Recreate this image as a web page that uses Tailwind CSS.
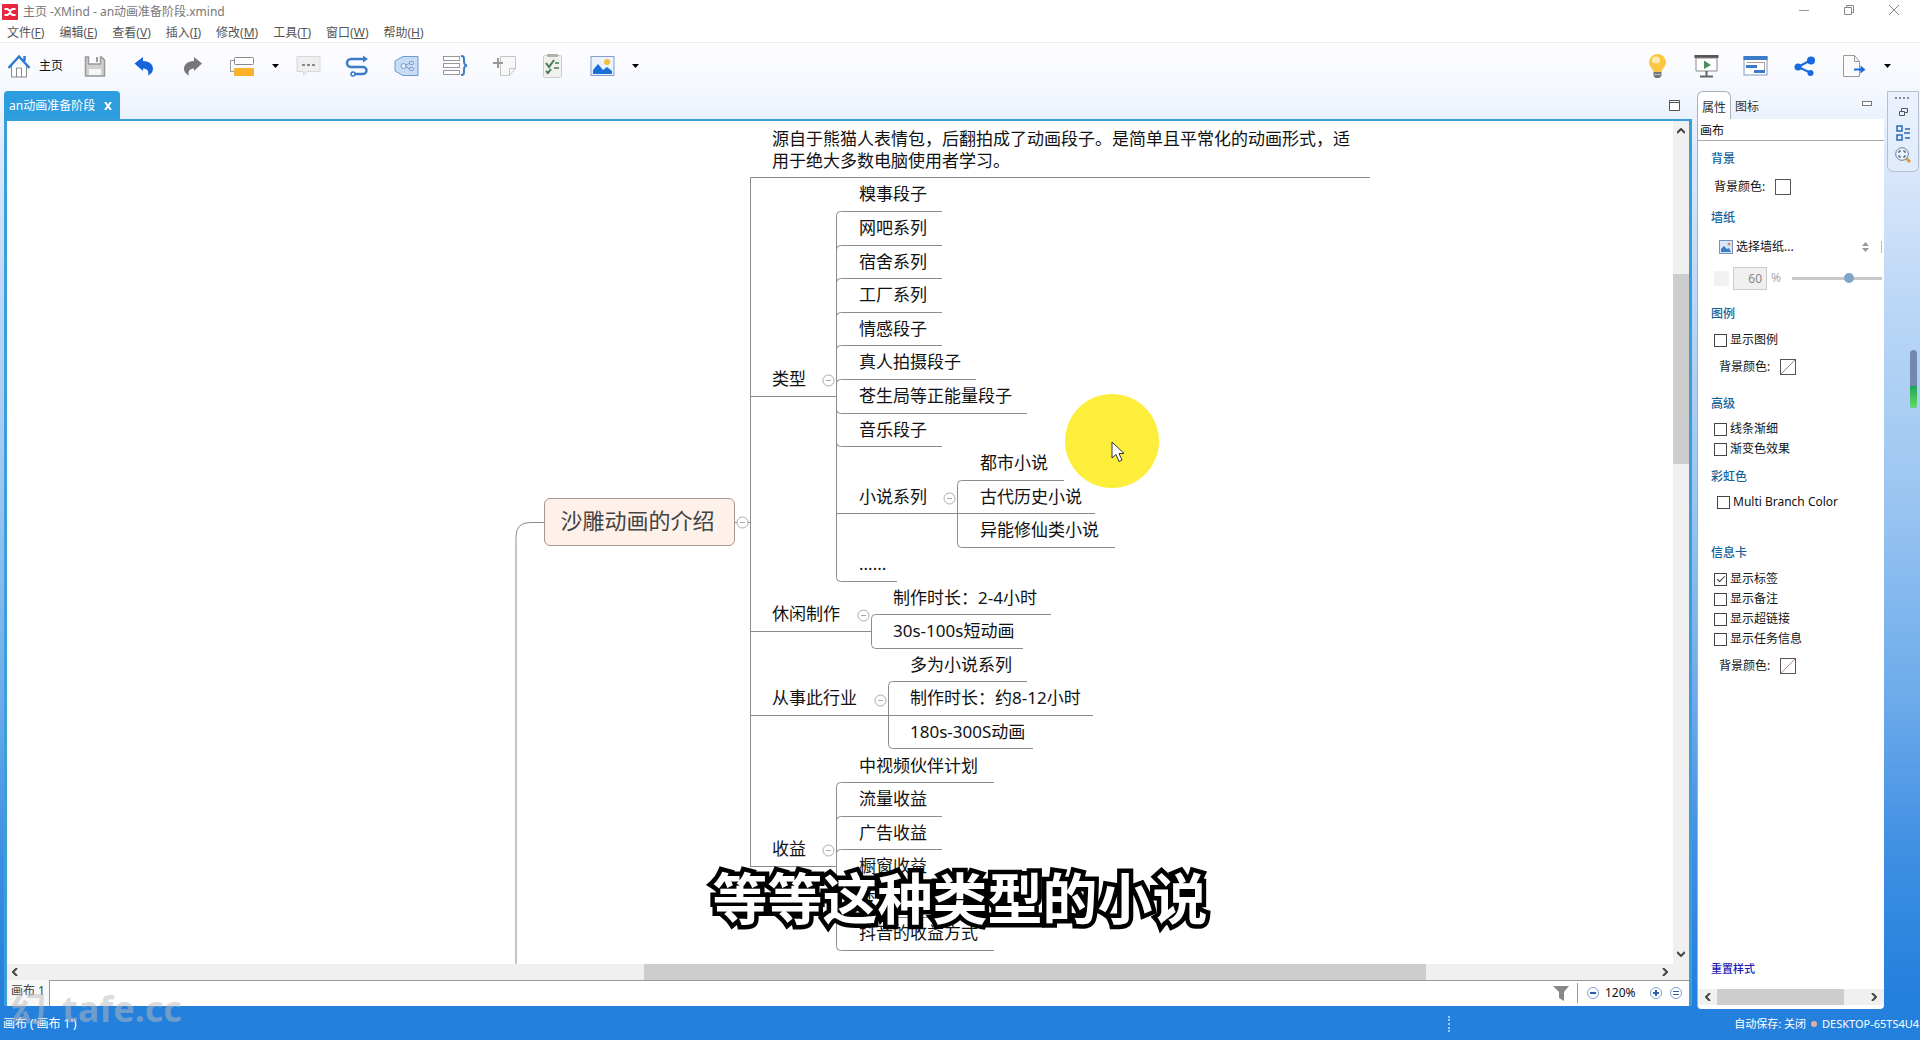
<!DOCTYPE html>
<html lang="zh-CN">
<head>
<meta charset="utf-8">
<title>主页 -XMind - an动画准备阶段.xmind</title>
<script src="https://cdn.jsdelivr.net/npm/@tailwindcss/browser@4"></script>
</head>
<body class="relative overflow-hidden font-['Noto_Sans','Noto_Sans_CJK_SC',sans-serif] text-xs text-[#111]">
<div class="flex h-screen flex-col bg-[linear-gradient(to_bottom,#ffffff_0%,#fdfdff_5%,#f0f5fe_10%,#dbe8fb_15%,#bcd7f6_29%,#9ac5f1_48%,#6dabeb_67%,#3f8fe3_82%,#2380dd_96%,#2380dd_100%)]">

<!-- Title bar -->
<header class="flex h-[23px] items-center bg-white pl-[2px] pr-1 text-[#777]">
  <svg class="size-4" viewBox="0 0 16 16"><rect width="16" height="16" rx="1" fill="#e8263f"/><path d="M2.500 5h3L8 7l2.500-2h3M2.500 11h3L8 9l2.500 2h3" stroke="#fff" stroke-width="2.200" fill="none"/></svg>
  <h1 class="ml-[5px] text-[12px] leading-5">主页 -XMind - an动画准备阶段.xmind</h1>
  <div class="ml-auto flex pb-1">
    <button aria-label="最小化" class="flex w-[45px] justify-center"><svg class="size-3" viewBox="0 0 12 12"><path d="M1 6.500h10" stroke="#999"/></svg></button>
    <button aria-label="还原" class="flex w-[45px] justify-center"><svg class="size-3" viewBox="0 0 12 12" fill="none" stroke="#888"><path d="M1.500 3.500h7v7h-7zM3.500 3.500v-2h7v7h-2"/></svg></button>
    <button aria-label="关闭" class="flex w-[45px] justify-center"><svg class="size-3" viewBox="0 0 12 12"><path d="M1 1l10 10M11 1L1 11" stroke="#888"/></svg></button>
  </div>
</header>
<nav class="flex h-5 items-center gap-[15px] border-b border-[#ececec] bg-white pl-[7px] leading-5 text-[#555]">
  <button>文件(<u>F</u>)</button><button>编辑(<u>E</u>)</button><button>查看(<u>V</u>)</button><button>插入(<u>I</u>)</button><button>修改(<u>M</u>)</button><button>工具(<u>T</u>)</button><button>窗口(<u>W</u>)</button><button>帮助(<u>H</u>)</button>
</nav>

<!-- Toolbar -->
<div class="flex h-12 items-center pb-[2px] pl-[7px] pr-7">
  <button class="flex w-14 items-center justify-between leading-5">
    <svg class="h-6 w-6" viewBox="0 0 24 24" fill="none"><path d="M4.500 12v11h15V12" stroke="#888" fill="#fff"/><path d="M9.500 23v-9h5v9" stroke="#888"/><path d="M1.500 14L12 2.500 22.500 14M17.500 2v5" stroke="#2f7bd0" stroke-width="2.500"/></svg>主页</button>
  <div class="ml-[19px] flex gap-6">
    <button aria-label="保存" class="w-[25px]"><svg class="h-6 w-[25px]" viewBox="0 0 25 24"><path d="M3.500 3h3v7h12V3h1l3 3v16h-19z" fill="#d0d0d0" stroke="#999" stroke-width="1.500"/><path d="M7 15h12v6H7z" fill="#f6f6f6"/><path d="M15 3v5" stroke="#999" stroke-width="2"/></svg></button>
    <button aria-label="撤销" class="w-[25px]"><svg class="h-6 w-[25px]" viewBox="0 0 25 24"><path d="M3.500 9.500L12 3v4c7 0 10 4 10 8 0 3-2 5-5 6.500 1-3 .5-7-5-7V17z" fill="#1565d8"/></svg></button>
    <button aria-label="重做" class="w-[25px]"><svg class="h-6 w-[25px]" viewBox="0 0 25 24"><path d="M22 9.500L14 3v4C7 7 4 11 4 15c0 3 2 5 5 6.500-1-3-.5-7 5-7V17z" fill="#777"/></svg></button>
    <button aria-label="主题" class="w-[25px]"><svg class="h-6 w-[25px]" viewBox="0 0 25 24" fill="none"><path d="M6 6.500H1.500v11H6" stroke="#999"/><rect x="5.500" y="3.500" width="19" height="7" rx="1" fill="#fff" stroke="#888"/><rect x="5" y="14" width="20" height="8" rx="1" fill="#fbb12a"/></svg></button>
  </div>
  <button aria-label="更多主题" class="ml-4 flex w-[10px] justify-center"><svg class="h-1 w-[7px]" viewBox="0 0 7 4"><path d="M0 0h7L3.500 4z"/></svg></button>
  <div class="ml-4 flex gap-6">
    <button aria-label="标注" class="w-[25px]"><svg class="h-6 w-[25px]" viewBox="0 0 25 24"><path d="M1 2.500h23v15H11l-3 4-1-4H1z" fill="#efefef" stroke="#d8d8d8"/><path d="M6 11h3M11 11h3M16 11h3" stroke="#888" stroke-width="2"/></svg></button>
    <button aria-label="联系" class="w-[25px]"><svg class="h-6 w-[25px]" viewBox="0 0 25 24" fill="none" stroke="#3b7bc8" stroke-width="2.500"><path d="M19 5H6a4 4 0 0 0 0 8h12a3.500 3.500 0 0 1 0 7h-8"/><circle cx="8" cy="20" r="2" stroke-width="1.500"/><path d="M18 1.500l5 3.500-5 3.500z" fill="#3b7bc8" stroke="none"/></svg></button>
    <button aria-label="外框" class="w-[25px]"><svg class="h-6 w-[25px]" viewBox="0 0 25 24" fill="none"><path d="M9 2.500h15v19H9L1 17V7z" fill="#c9dcf5" stroke="#6e9ad2"/><g stroke="#6e9ad2"><circle cx="9.500" cy="12" r="2.500" fill="#e6effb"/><path d="M12 11l4-2M12 13l4 2"/><rect x="15.500" y="7.500" width="4" height="3" rx="1"/><rect x="15.500" y="13.500" width="4" height="3" rx="1"/></g></svg></button>
    <button aria-label="概要" class="w-[25px]"><svg class="h-6 w-[25px]" viewBox="0 0 25 24" fill="none"><g stroke="#999" fill="#fff"><rect x=".5" y="2.500" width="16" height="4"/><rect x=".5" y="9.500" width="16" height="4"/><rect x=".5" y="16.500" width="16" height="4"/></g><path d="M18 2c3 0 3 1 3 4s0 5 3 5.500c-3 .5-3 2.500-3 5.500s0 4-3 4" stroke="#3b7bc8" stroke-width="2"/></svg></button>
    <button aria-label="备注" class="w-[25px]"><svg class="h-6 w-[25px]" viewBox="0 0 25 24" fill="none"><path d="M8.500 2.500h15v12l-6 7h-9z" fill="#f8f8f8" stroke="#c4c4c4"/><path d="M23.500 14.500h-6v7" stroke="#c4c4c4"/><path d="M1 9h10M6 4v10" stroke="#999" stroke-width="2"/></svg></button>
    <button aria-label="任务" class="w-[25px]"><svg class="h-6 w-[25px]" viewBox="0 0 25 24" fill="none"><rect x="2.500" y="1.500" width="18" height="22" rx="1" fill="#f0f0ec" stroke="#ccc"/><rect x="6" y="0" width="11" height="3" rx="1" fill="#b0b0a8"/><path d="M5 9l3 4 5-7M5 17l2 2 3-4" stroke="#4a7a55" stroke-width="2"/><path d="M14 9h4M13 14h5" stroke="#4a7a55" stroke-width="1.500"/></svg></button>
    <button aria-label="图片" class="w-[25px]"><svg class="h-6 w-[25px]" viewBox="0 0 25 24"><rect x="1" y="2.500" width="23" height="19" fill="#eaf2fc" stroke="#8a9bd0"/><circle cx="17" cy="8" r="3" fill="#f6bf3a"/><path d="M3 20v-4l5-6 5 6 4-3 5 4v3z" fill="#1c6fd4"/></svg></button>
  </div>
  <button aria-label="更多图片" class="ml-[15px] flex w-[10px] justify-center"><svg class="h-1 w-[7px]" viewBox="0 0 7 4"><path d="M0 0h7L3.500 4z"/></svg></button>

  <div class="ml-auto flex gap-6">
    <button aria-label="头脑风暴" class="w-[25px]"><svg class="h-6 w-[25px]" viewBox="0 0 25 24"><path d="M12.500 0a8.500 8.500 0 0 0-8.500 8.500c0 4 3.500 5.500 4.500 9.500h8c1-4 4.500-5.500 4.500-9.500A8.500 8.500 0 0 0 12.500 0z" fill="#fbc743"/><ellipse cx="11" cy="6" rx="4" ry="3.500" fill="#fdeab0"/><path d="M8.500 18h8v4l-2 2h-4l-2-2z" fill="#777"/><path d="M8.500 20.500h8" stroke="#bbb"/></svg></button>
    <button aria-label="演示" class="w-[25px]"><svg class="h-6 w-[25px]" viewBox="0 0 25 24"><path d="M.5 1h24v3H.5z" fill="#555"/><path d="M2 4h21v13H2z" fill="#fff" stroke="#888"/><path d="M10 6.500l7 4.500-7 4z" fill="#4d8f5a"/><path d="M12.500 17v5M6 22.500h13" stroke="#666" stroke-width="2"/></svg></button>
    <button aria-label="甘特图" class="w-[25px]"><svg class="h-6 w-[25px]" viewBox="0 0 25 24"><rect x="1" y="3" width="23" height="18" fill="#fff" stroke="#7a9cc6"/><path d="M.5 2h24v4H.5z" fill="#3b7bc8"/><path d="M3.500 8.500h18M21.500 8v10" stroke="#b69aa0"/><path d="M3 12.500h11M11 17.500h11" stroke="#3b7bc8" stroke-width="3"/></svg></button>
    <button aria-label="分享" class="w-[25px]"><svg class="h-6 w-[25px]" viewBox="0 0 25 24" fill="#1769e0"><path d="M19 6L6 13l13 6" fill="none" stroke="#1769e0" stroke-width="2"/><circle cx="19" cy="6.500" r="4"/><circle cx="6" cy="13" r="3.500"/><circle cx="18.500" cy="19" r="3"/></svg></button>
    <button aria-label="导出" class="w-[25px]"><svg class="h-6 w-[25px]" viewBox="0 0 25 24" fill="none"><path d="M2.500 1.500h11l5 6v15h-16z" fill="#fbfbfb" stroke="#999"/><path d="M13.500 1.500v6h5" stroke="#999"/><path d="M13 15.500h9" stroke="#1769e0" stroke-width="2"/><path d="M19.500 11.500l5 4-5 4z" fill="#1769e0"/></svg></button>
  </div>
  <button aria-label="更多导出" class="ml-4 flex w-[10px] justify-center"><svg class="h-1 w-[7px]" viewBox="0 0 7 4"><path d="M0 0h7L3.500 4z"/></svg></button>
</div>

<main class="flex min-h-0 flex-1 pl-1">
  <!-- Editor -->
  <section class="mb-[3px] mr-[5px] flex min-w-0 flex-1 flex-col">
    <div class="flex h-7 items-center">
      <div class="flex h-7 w-[116px] items-center justify-between rounded-t-[4px] bg-[#2e9de0] pl-[5px] pr-2 pt-[2px] leading-5 text-white">
        <span class="whitespace-nowrap">an动画准备阶段</span>
        <button aria-label="关闭标签"><svg class="size-2" viewBox="0 0 8 8"><path d="M1 0l6 8M7 0L1 8" stroke="#fff" stroke-width="2"/></svg></button>
      </div>
      <button aria-label="最大化" class="ml-auto mr-3"><svg class="size-[11px]" viewBox="0 0 11 11"><path d="M.5.5h10v10H.5zM.5 2.500h10" fill="#fff" stroke="#555"/></svg></button>
    </div>
    <div class="flex min-h-0 flex-1 flex-col border-x-[3px] border-t-2 border-[#3a9fd8] bg-white">
      <div class="flex min-h-0 flex-1">
        <!-- Mind map canvas -->
        <div class="relative min-w-0 flex-1 overflow-hidden whitespace-nowrap text-[17px] leading-5">
          <svg class="absolute left-0 top-0 h-[844px] w-[1400px]" viewBox="7 121 1400 844" fill="none" stroke="#8c8c8c">
            <path d="M544 522.500h-14q-14 0-14 14V965M735 522.500h15.500M750.500 866.500V177.500H1370"/>
            <path d="M750 396.500h86.500M750 631.500h121.500M750 715.500h343M750 866.500h86.500M837 513.500h258"/>
            <path d="M942 211.500H840.500q-4 0-4 4V577.500q0 4 4 4H897M942 245.500H840.500q-4 0-4 4M942 278.500H840.500q-4 0-4 4M942 312.500H840.500q-4 0-4 4M942 345.500H840.500q-4 0-4 4M976 379.500H840.500q-4 0-4 4M1027 413.500H840.500q-4 0-4-4M942 446.500H840.500q-4 0-4-4"/>
            <path d="M1064 480.500H961.500q-4 0-4 4V543.500q0 4 4 4H1115"/>
            <path d="M1051 614.500H875.500q-4 0-4 4V644.500q0 4 4 4H1023"/>
            <path d="M1027 681.500H892.500q-4 0-4 4V744.500q0 4 4 4H1033"/>
            <path d="M994 782.500H840.500q-4 0-4 4V946.500q0 4 4 4H994M942 816.500H840.500q-4 0-4 4M942 849.500H840.500q-4 0-4 4M942 883.500H840.500q-4 0-4-4M942 917.500H840.500q-4 0-4-4"/>
            <g fill="#fff" stroke="#aaa"><circle cx="742.500" cy="522.500" r="5.500"/><circle cx="828.500" cy="380.500" r="5.500"/><circle cx="949.500" cy="498.500" r="5.500"/><circle cx="863.500" cy="615.500" r="5.500"/><circle cx="880.500" cy="700.500" r="5.500"/><circle cx="828.500" cy="850.500" r="5.500"/><path d="M740 522.500h5M826 380.500h5M947 498.500h5M861 615.500h5M878 700.500h5M826 850.500h5"/></g>
          </svg>
          <div class="absolute left-[537px] top-[377px] flex h-12 w-[191px] items-center justify-center rounded-md border border-[#a89790] bg-[#fef1ea] pb-1 pr-1 text-[22px] text-[#444]">沙雕动画的介绍</div>
          <p class="absolute left-[765px] top-[7px] leading-[22px]">源自于熊猫人表情包，后翻拍成了动画段子。是简单且平常化的动画形式，适<br>用于绝大多数电脑使用者学习。</p>
          <span class="absolute left-[765px] top-[248px]">类型</span>
          <span class="absolute left-[852px] top-[63px]">糗事段子</span>
          <span class="absolute left-[852px] top-[97px]">网吧系列</span>
          <span class="absolute left-[852px] top-[131px]">宿舍系列</span>
          <span class="absolute left-[852px] top-[164px]">工厂系列</span>
          <span class="absolute left-[852px] top-[198px]">情感段子</span>
          <span class="absolute left-[852px] top-[231px]">真人拍摄段子</span>
          <span class="absolute left-[852px] top-[265px]">苍生局等正能量段子</span>
          <span class="absolute left-[852px] top-[299px]">音乐段子</span>
          <span class="absolute left-[852px] top-[366px]">小说系列</span>
          <span class="absolute left-[852px] top-[433px]">......</span>
          <span class="absolute left-[973px] top-[332px]">都市小说</span>
          <span class="absolute left-[973px] top-[366px]">古代历史小说</span>
          <span class="absolute left-[973px] top-[399px]">异能修仙类小说</span>
          <span class="absolute left-[765px] top-[483px]">休闲制作</span>
          <span class="absolute left-[886px] top-[467px]">制作时长：2-4小时</span>
          <span class="absolute left-[886px] top-[500px]">30s-100s短动画</span>
          <span class="absolute left-[765px] top-[567px]">从事此行业</span>
          <span class="absolute left-[903px] top-[534px]">多为小说系列</span>
          <span class="absolute left-[903px] top-[567px]">制作时长：约8-12小时</span>
          <span class="absolute left-[903px] top-[601px]">180s-300S动画</span>
          <span class="absolute left-[765px] top-[718px]">收益</span>
          <span class="absolute left-[852px] top-[635px]">中视频伙伴计划</span>
          <span class="absolute left-[852px] top-[668px]">流量收益</span>
          <span class="absolute left-[852px] top-[702px]">广告收益</span>
          <span class="absolute left-[852px] top-[735px]">橱窗收益</span>
          <span class="absolute left-[852px] top-[769px]">变现收益</span>
          <span class="absolute left-[852px] top-[802px]">抖音的收益方式</span>
          <!-- Pointer with highlight -->
          <div class="absolute left-[1058px] top-[273px] size-[94px] rounded-full bg-[#fdee3c]"></div>
          <svg class="absolute left-[1104px] top-[320px] h-[22px] w-[14px]" viewBox="0 0 14 22"><path d="M1 1v16l4-3.500 3 7 3-1.500-3-6.500h5z" fill="#fff" stroke="#333"/></svg>
        </div>
        <div class="flex w-4 flex-col items-center bg-[#f0f0f0]">
          <button aria-label="向上滚动" class="flex h-5 items-center"><svg class="h-[6px] w-[8px]" viewBox="0 0 8 6"><path d="M0 5l4-4 4 4" fill="none" stroke="#444" stroke-width="2"/></svg></button>
          <div class="grow-[133]"></div><div class="w-full grow-[190] bg-[#cdcdcd]"></div><div class="grow-[480]"></div>
          <button aria-label="向下滚动" class="flex h-5 items-center"><svg class="h-[6px] w-[8px]" viewBox="0 0 8 6"><path d="M0 1l4 4 4-4" fill="none" stroke="#444" stroke-width="2"/></svg></button>
        </div>
      </div>
      <div class="flex h-4 items-center bg-[#f0f0f0] pr-4">
        <button aria-label="向左滚动" class="flex w-4 justify-center"><svg class="h-[8px] w-[6px]" viewBox="0 0 6 8"><path d="M5 0L1 4l4 4" fill="none" stroke="#444" stroke-width="2"/></svg></button>
        <div class="grow-[621]"></div><div class="h-full grow-[782] bg-[#cdcdcd]"></div><div class="grow-[231]"></div>
        <button aria-label="向右滚动" class="flex w-4 justify-center"><svg class="h-[8px] w-[6px]" viewBox="0 0 6 8"><path d="M1 0l4 4-4 4" fill="none" stroke="#444" stroke-width="2"/></svg></button>
      </div>
      <div class="flex h-[26px] leading-5">
        <button class="w-[43px] border-r border-[#999] bg-[#f7f7f7] pb-1 text-[#444]">画布 1</button>
        <div class="flex flex-1 items-center justify-end border-t border-[#999] pb-[2px] pr-[7px]">
          <svg class="mr-2 h-4 w-4" viewBox="0 0 16 16"><path d="M0 1h16l-5 6v9l-5-3V7z" fill="#888"/></svg>
          <div class="mr-[9px] h-5 border-l border-[#999]"></div>
          <button aria-label="缩小"><svg class="size-3" viewBox="0 0 12 12" fill="none" stroke="#2a5fa8"><circle cx="6" cy="6" r="5.500" stroke="#7fa0cc"/><path d="M3 6h6" stroke-width="2"/></svg></button>
          <span class="ml-[6px] mr-3 w-[33px]">120%</span>
          <button aria-label="放大"><svg class="size-3" viewBox="0 0 12 12" fill="none" stroke="#2a5fa8"><circle cx="6" cy="6" r="5.500" stroke="#7fa0cc"/><path d="M3 6h6M6 3v6" stroke-width="2"/></svg></button>
          <button aria-label="实际大小" class="ml-2"><svg class="size-3" viewBox="0 0 12 12" fill="none" stroke="#2a5fa8"><circle cx="6" cy="6" r="5.500" stroke="#7fa0cc"/><path d="M3 4.500h6M3 7.500h6"/></svg></button>
        </div>
      </div>
    </div>
  </section>

  <!-- Properties panel -->
  <aside class="flex w-[187px] flex-col leading-5">
    <div class="flex h-7 items-center text-[#333]">
      <button class="h-7 w-[34px] rounded-t-md border border-b-0 border-[#a8b0bc] bg-white pt-1">属性</button>
      <button class="ml-1 mt-1 h-6">图标</button>
      <button aria-label="最小化面板" class="ml-auto mr-3 mb-1"><svg class="h-[5px] w-[10px]" viewBox="0 0 10 5"><rect x=".5" y=".5" width="9" height="4" fill="#fff" stroke="#777"/></svg></button>
    </div>
    <div class="flex min-h-0 flex-1 flex-col overflow-hidden rounded-b border-l border-[#a8b0bc] bg-white">
      <h2 class="h-[22px] border-b border-[#aaa] pl-[2px] pt-[2px]">画布</h2>
      <h3 class="mt-2 pl-[13px] font-medium text-[#14629c]">背景</h3>
      <div class="mt-2 flex items-center pl-4">背景颜色:<button aria-label="背景颜色" class="ml-[10px] size-4 border border-[#555] bg-white"></button></div>
      <h3 class="mt-[11px] pl-[13px] font-medium text-[#14629c]">墙纸</h3>
      <div class="mt-[9px] flex h-5 items-center pl-[21px]">
        <svg class="mr-[3px] size-[14px]" viewBox="0 0 14 14"><rect x=".5" y=".5" width="13" height="13" fill="#d9e6f8" stroke="#7d8fb5"/><circle cx="10" cy="4" r="1.500" fill="#d98a7c"/><path d="M2 12V9l3-3 3 3 2-1 2 4z" fill="#3b7bc8"/></svg>
        <select aria-label="墙纸" class="w-[126px] appearance-none bg-transparent"><option>选择墙纸...</option></select>
        <svg class="h-[10px] w-[7px]" viewBox="0 0 7 10"><path d="M0 4l3.500-4L7 4zM0 6l3.500 4L7 6z" fill="#999"/></svg>
        <div class="ml-3 h-3 w-px bg-[#bbb]"></div>
      </div>
      <div class="mt-[9px] flex h-6 items-center pl-4 text-[#aaa]">
        <span class="size-[15px] bg-[#f2f2f2]"></span>
        <input aria-label="不透明度" value="60" class="ml-1 h-[23px] w-[34px] border border-[#ccc] bg-[#f0f0f0] pr-1 text-right text-[#888]">
        <span class="ml-1 w-[21px]">%</span>
        <input type="range" aria-label="不透明度滑块" value="65" class="h-[3px] w-[90px] appearance-none bg-[#c8c8c8] [&::-webkit-slider-thumb]:h-[10px] [&::-webkit-slider-thumb]:w-[10px] [&::-webkit-slider-thumb]:appearance-none [&::-webkit-slider-thumb]:rounded-full [&::-webkit-slider-thumb]:bg-[#7fa6c8]">
      </div>
      <h3 class="mt-[14px] pl-[13px] font-medium text-[#14629c]">图例</h3>
      <label class="mt-[6px] flex items-center gap-[3px] pl-4"><input type="checkbox" class="size-[13px] appearance-none border border-[#444] bg-white">显示图例</label>
      <div class="mt-[7px] flex items-center pl-[21px]">背景颜色:<button aria-label="图例背景颜色" class="ml-[10px] size-4 border border-[#555]"><svg viewBox="0 0 14 14"><path d="M0 14L14 0" stroke="#888"/></svg></button></div>
      <h3 class="mt-[17px] pl-[13px] font-medium text-[#14629c]">高级</h3>
      <label class="mt-[5px] flex items-center gap-[3px] pl-4"><input type="checkbox" class="size-[13px] appearance-none border border-[#444] bg-white">线条渐细</label>
      <label class="flex items-center gap-[3px] pl-4"><input type="checkbox" class="size-[13px] appearance-none border border-[#444] bg-white">渐变色效果</label>
      <h3 class="mt-2 pl-[13px] font-medium text-[#14629c]">彩虹色</h3>
      <label class="mt-[5px] flex items-center gap-[3px] pl-[19px]"><input type="checkbox" class="size-[13px] appearance-none border border-[#444] bg-white">Multi Branch Color</label>
      <h3 class="mt-[31px] pl-[13px] font-medium text-[#14629c]">信息卡</h3>
      <label class="mt-[6px] flex items-center gap-[3px] pl-4"><input type="checkbox" checked class="relative size-[13px] appearance-none border border-[#444] bg-white after:absolute after:left-[4px] after:top-0 after:h-2 after:w-1 after:rotate-45 after:border-b after:border-r after:border-[#333]">显示标签</label>
      <label class="flex items-center gap-[3px] pl-4"><input type="checkbox" class="size-[13px] appearance-none border border-[#444] bg-white">显示备注</label>
      <label class="flex items-center gap-[3px] pl-4"><input type="checkbox" class="size-[13px] appearance-none border border-[#444] bg-white">显示超链接</label>
      <label class="flex items-center gap-[3px] pl-4"><input type="checkbox" class="size-[13px] appearance-none border border-[#444] bg-white">显示任务信息</label>
      <div class="mt-[7px] flex items-center pl-[21px]">背景颜色:<button aria-label="信息卡背景颜色" class="ml-[10px] size-4 border border-[#555]"><svg viewBox="0 0 14 14"><path d="M0 14L14 0" stroke="#b88"/></svg></button></div>
      <a href="#" class="mt-auto mb-[10px] pl-[13px] text-[11px] font-medium text-[#1a1ab8]">重置样式</a>
      <div class="mb-1 flex h-4 items-center bg-[#f0f0f0]">
        <button aria-label="面板向左" class="flex w-[19px] justify-center"><svg class="h-[8px] w-[6px]" viewBox="0 0 6 8"><path d="M5 0L1 4l4 4" fill="none" stroke="#444" stroke-width="2"/></svg></button>
        <div class="h-full grow-[128] bg-[#cdcdcd]"></div><div class="grow-[20]"></div>
        <button aria-label="面板向右" class="flex w-5 justify-center"><svg class="h-[8px] w-[6px]" viewBox="0 0 6 8"><path d="M1 0l4 4-4 4" fill="none" stroke="#444" stroke-width="2"/></svg></button>
      </div>
    </div>
  </aside>

  <!-- Side strip -->
  <div class="ml-[3px] flex w-[33px] flex-col">
    <div class="flex h-[81px] w-8 flex-col items-center rounded-b-md border border-[#b4bfd0] bg-[#e6effc]/60 pt-[5px]">
      <svg class="h-[2px] w-4" viewBox="0 0 16 2"><path d="M0 1h16" stroke="#889" stroke-width="2" stroke-dasharray="2 2"/></svg>
      <button aria-label="还原视图" class="mt-[9px]"><svg class="h-[8px] w-[9px]" viewBox="0 0 9 8" fill="none" stroke="#555"><path d="M2.500 3V.5h6v4H6M.5 3.500h5v4h-5z"/></svg></button>
      <button aria-label="大纲" class="mt-[9px]"><svg class="h-4 w-[14px]" viewBox="0 0 14 16" fill="none" stroke="#2a6ab0" stroke-width="1.500"><path d="M1 1h5v5H1zM1 10h5v5H1zM9 4h5M8 8h6M9 13h5"/></svg></button>
      <button aria-label="概览" class="mt-[6px]"><svg class="h-4 w-4" viewBox="0 0 16 16" fill="none"><path d="M11 11l4 4" stroke="#e09a2b" stroke-width="3"/><circle cx="7" cy="7" r="6.300" fill="#eef4fb" stroke="#5b7fa8"/><path d="M4 6V4h2M8 4h2v2M10 8v2H8M6 10H4V8" stroke="#345"/></svg></button>
    </div>
    <div class="ml-[23px] mt-[178px] flex h-[58px] w-[7px] flex-col overflow-hidden rounded-full bg-[#7389ac]"><div class="mt-auto h-[22px] bg-linear-to-b from-[#18a558] to-[#63dc66]"></div></div>
  </div>
</main>

<!-- Status bar -->
<footer class="flex h-[31px] items-center pb-[2px] pl-[3px] leading-5 text-white">
  <span>画布 ('画布 1')</span>
  <div class="ml-auto mr-[284px] h-4 border-l-2 border-dotted border-[#a5cdf5]"></div>
  <span class="text-[11px]">自动保存: 关闭</span>
  <span class="mx-[5px] size-[6px] rounded-full bg-[#e0b0a4]"></span>
  <span class="w-[98px] whitespace-nowrap text-[11px]">DESKTOP-65TS4U4</span>
</footer>
</div>

<!-- Video watermark and caption -->
<div class="pointer-events-none absolute bottom-[11px] left-[10px] flex items-center gap-4 text-[36px] font-bold leading-10 text-[#b9b9b9]/50"><span>幻</span><span>tafe.cc</span></div>
<p class="pointer-events-none absolute inset-x-0 bottom-[112px] text-center text-[55px] font-bold leading-[60px] text-white [-webkit-text-stroke:9px_black] [paint-order:stroke]">等等这种类型的小说</p>
</body>
</html>
